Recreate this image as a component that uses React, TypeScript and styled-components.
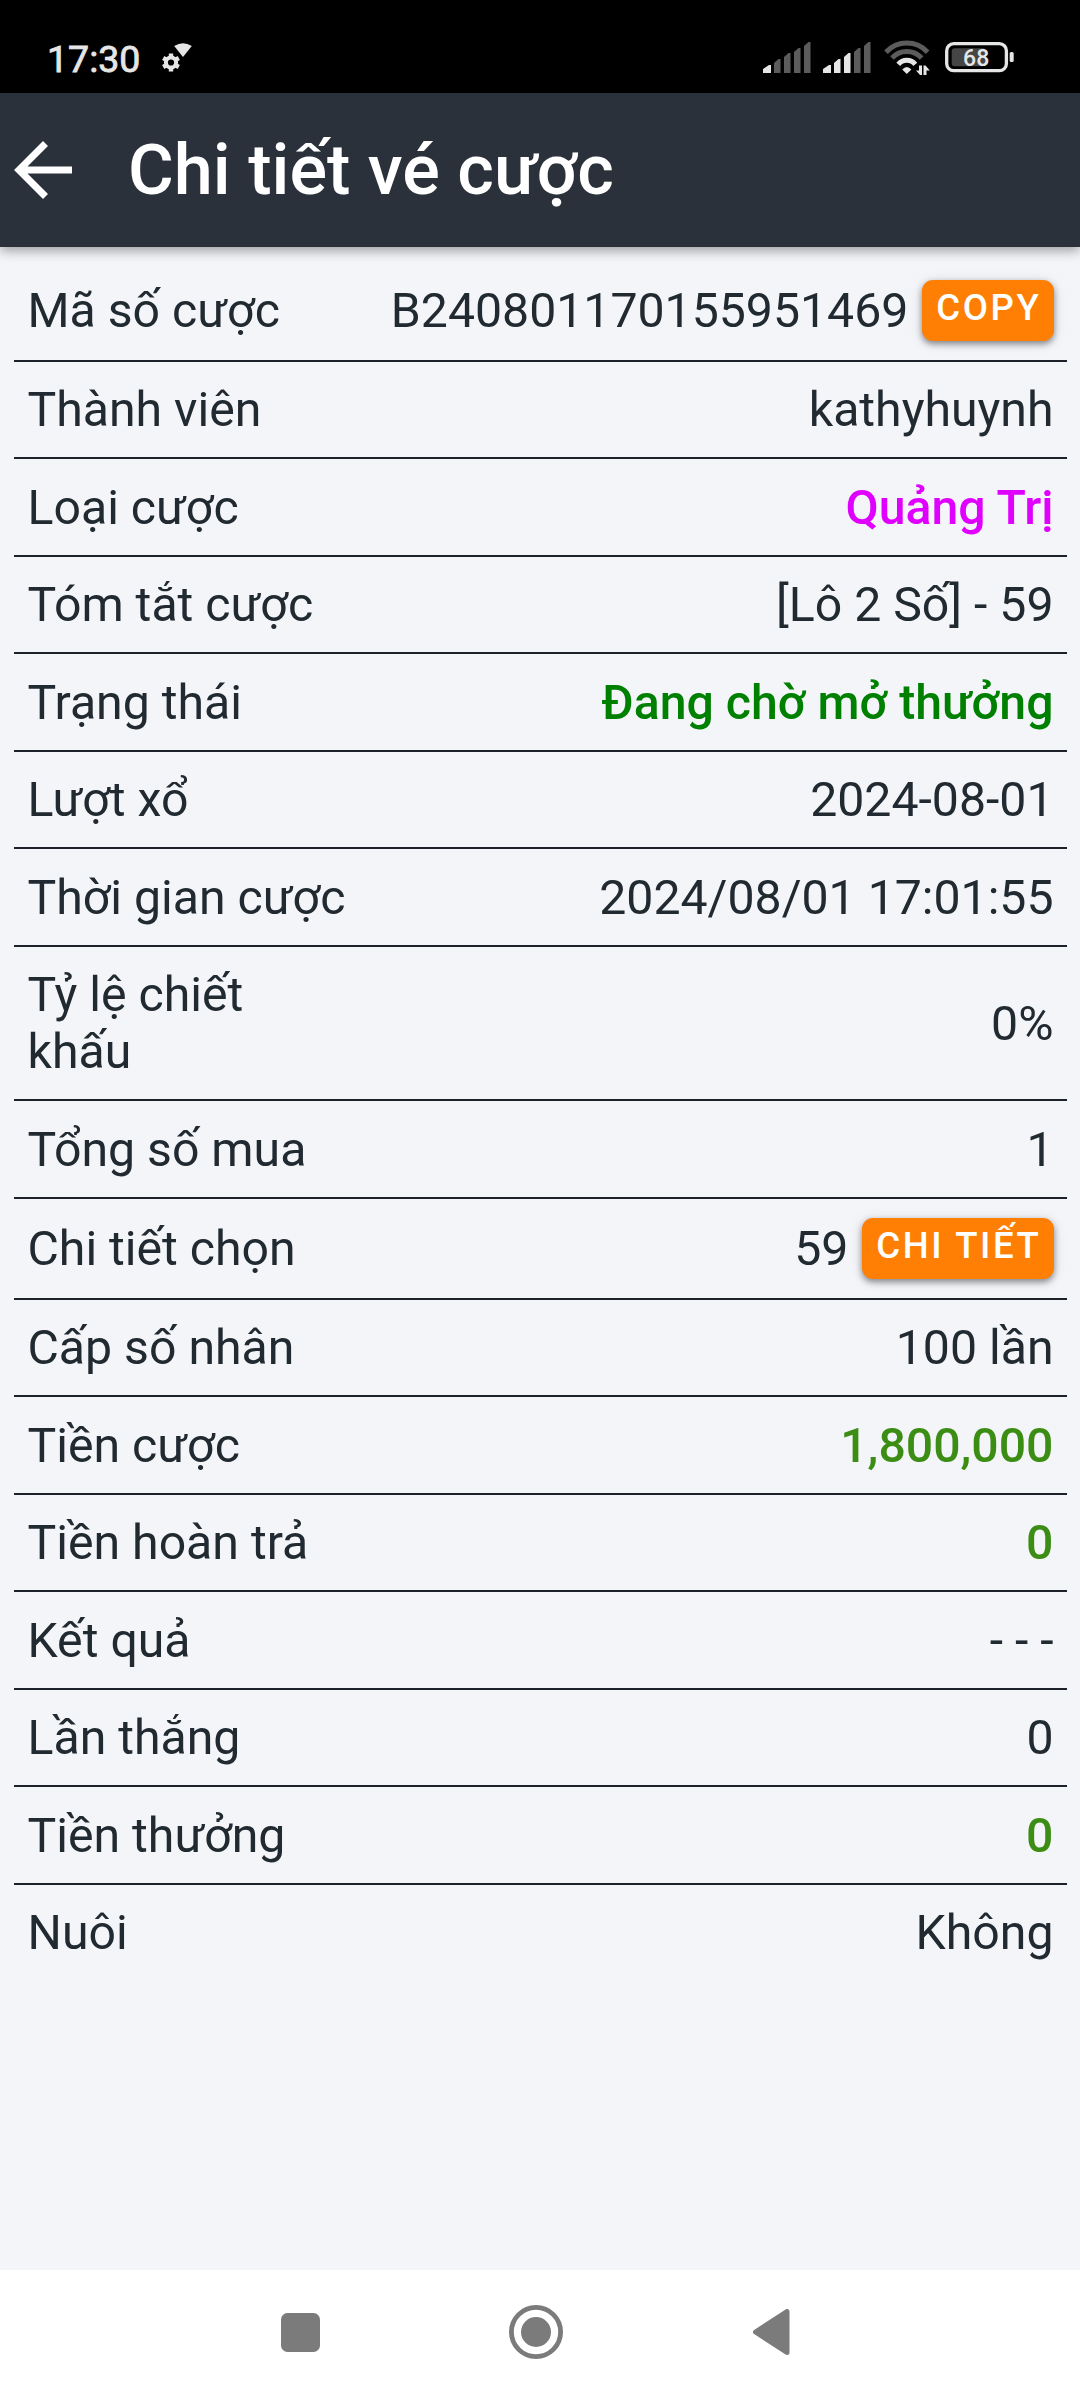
import React from "react";
import styled, { createGlobalStyle } from "styled-components";

const GlobalStyle = createGlobalStyle`
  * { box-sizing: border-box; }
  body { margin: 0; background: #f3f5f9; }
`;

const Screen = styled.div`
  display: flex;
  flex-direction: column;
  width: 1080px;
  height: 2400px;
  background: #f3f5f9;
  color: #212931;
  font-family: Roboto, "Noto Sans", sans-serif;
`;

const StatusBar = styled.div`
  display: flex;
  align-items: center;
  justify-content: space-between;
  flex: none;
  height: 93px;
  padding: 22px 64px 0 47px;
  background: #000;
  color: #e6e6e6;
`;

const StatusGroup = styled.div`
  display: flex;
  align-items: center;
`;

const Clock = styled.span`
  flex: none;
  width: 115px;
  padding-top: 2px;
  font-size: 37.5px;
  font-weight: 400;
  line-height: 44px;
  -webkit-text-stroke: 0.8px #e6e6e6;
`;

const Header = styled.header`
  display: flex;
  align-items: center;
  flex: none;
  height: 154px;
  padding-left: 14px;
  background: #2b313b;
  box-shadow: 0 4px 11px rgba(0, 0, 0, 0.35);
  z-index: 1;
`;

const BackButton = styled.button`
  display: flex;
  flex: none;
  width: 114px;
  padding: 0;
  border: 0;
  background: none;
`;

const Title = styled.h1`
  margin: 0;
  color: #fff;
  font-size: 70.2px;
  font-weight: 500;
  line-height: 82px;
`;

const Details = styled.main`
  flex: 1;
  padding: 14px 13px 0 14px;
`;

const Row = styled.div<{ $height?: number }>`
  display: flex;
  align-items: center;
  justify-content: space-between;
  height: ${(p) => p.$height ?? 97.5}px;
  padding: 0 13.5px;
  border-bottom: 2px solid #1d2129;
  font-size: 48.2px;
  line-height: 57px;
  &:last-child {
    border-bottom-color: transparent;
  }
`;

const Label = styled.span`
  width: 323px;
`;

const Value = styled.span<{ $color?: string }>`
  display: flex;
  align-items: center;
  gap: 14px;
  white-space: nowrap;
  color: ${(p) => p.$color ?? "inherit"};
  font-weight: ${(p) => (p.$color ? 500 : 400)};
`;

const Action = styled.button`
  height: 61px;
  padding: 0 12px 5px 14px;
  border: 0;
  border-radius: 11px;
  background: #ff7f04;
  box-shadow: 0 3px 6px rgba(0, 0, 0, 0.4), 0 2px 14px rgba(0, 0, 0, 0.12);
  color: #fff;
  font: 500 36.6px/56px Roboto, sans-serif;
  letter-spacing: 2.6px;
`;

const NavBar = styled.nav`
  display: flex;
  align-items: center;
  flex: none;
  height: 130px;
  padding: 0 0 6px 281px;
  gap: 189px;
  background: #fff;
`;

const BAR_TOPS = [23, 17, 11, 6, 0];

function Signal({ active }: { active: number }) {
  return (
    <svg width="48" height="31" viewBox="0 0 48 31">
      {BAR_TOPS.map((top, i) => {
        const left = i === 0 ? 0 : 1 + i * 10;
        const right = i === 0 ? 8 : left + 6.5;
        return (
          <path
            key={top}
            d={`M${left} ${top + 4}L${right - 2} ${top}H${right}V31H${left}Z`}
            fill={i < active ? "#e6e6e6" : "#5c5c5c"}
          />
        );
      })}
    </svg>
  );
}

const SignalIcons = styled.div`
  display: flex;
  gap: 12px;
  margin-right: 13px;
`;

const WifiSvg = styled.svg`
  margin-right: 14px;
`;

function Wifi() {
  return (
    <WifiSvg width="47" height="35" viewBox="0 0 47 35" fill="none" strokeWidth="5">
      <path d="M2 12.200A28.300 28.300 0 0 1 43.600 12.200" stroke="#5c5c5c" />
      <path d="M8 18A20 20 0 0 1 37.600 18" stroke="#5c5c5c" />
      <path d="M14.300 24.300A11 11 0 0 1 31.300 24.300" stroke="#e6e6e6" />
      <path d="M22.800 34L18.200 29.500Q22.800 24.500 27.400 29.500Z" fill="#e6e6e6" />
      <path d="M38 25.500V35L36 35L32 30.500H35V25.500Z" fill="#e6e6e6" />
      <path d="M39.500 35V25.500H41.500L45.800 30.500H42.500V35Z" fill="#e6e6e6" />
    </WifiSvg>
  );
}

function Battery() {
  return (
    <svg width="71" height="31" viewBox="0 0 71 31">
      <rect x="1.700" y="1.700" width="59.700" height="27" rx="7" fill="none" stroke="#e6e6e6" strokeWidth="3.300" />
      <rect x="6.700" y="6.200" width="34" height="18" rx="3" fill="#454545" />
      <rect x="64.700" y="10" width="4" height="10" rx="1.500" fill="#e6e6e6" />
      <text x="31.200" y="23.900" textAnchor="middle" fontFamily="Roboto, sans-serif" fontSize="23" fontWeight="500" fill="#e6e6e6">
        68
      </text>
    </svg>
  );
}

function GearWifi() {
  return (
    <svg width="32" height="30" viewBox="0 0 32 30">
      <path d="M12.200 3Q21 -2.500 29.800 3L21 14Z" fill="#e6e6e6" />
      <circle cx="9" cy="19.500" r="5.100" fill="none" stroke="#e6e6e6" strokeWidth="4" />
      {[0, 60, 120, 180, 240, 300].map((a) => (
        <rect key={a} x="6.800" y="10.500" width="4.400" height="4" fill="#e6e6e6" transform={`rotate(${a} 9 19.500)`} />
      ))}
    </svg>
  );
}

type Entry = { label: string; value: string; color?: string; action?: string; height?: number };

const ENTRIES: Entry[] = [
  { label: "Mã số cược", value: "B240801170155951469", action: "COPY", height: 100.9 },
  { label: "Thành viên", value: "kathyhuynh" },
  { label: "Loại cược", value: "Quảng Trị", color: "#e000ff" },
  { label: "Tóm tắt cược", value: "[Lô 2 Số] - 59" },
  { label: "Trạng thái", value: "Đang chờ mở thưởng", color: "#008000" },
  { label: "Lượt xổ", value: "2024-08-01" },
  { label: "Thời gian cược", value: "2024/08/01 17:01:55" },
  { label: "Tỷ lệ chiết khấu", value: "0%", height: 154.5 },
  { label: "Tổng số mua", value: "1" },
  { label: "Chi tiết chọn", value: "59", action: "CHI TIẾT", height: 101.1 },
  { label: "Cấp số nhân", value: "100 lần" },
  { label: "Tiền cược", value: "1,800,000", color: "#3c8d14" },
  { label: "Tiền hoàn trả", value: "0", color: "#3c8d14" },
  { label: "Kết quả", value: "- - -" },
  { label: "Lần thắng", value: "0" },
  { label: "Tiền thưởng", value: "0", color: "#3c8d14" },
  { label: "Nuôi", value: "Không" },
];

export default function App() {
  return (
    <Screen>
      <GlobalStyle />
      <StatusBar>
        <StatusGroup>
          <Clock>17:30</Clock>
          <GearWifi />
        </StatusGroup>
        <StatusGroup>
          <SignalIcons>
            <Signal active={1} />
            <Signal active={3} />
          </SignalIcons>
          <Wifi />
          <Battery />
        </StatusGroup>
      </StatusBar>
      <Header>
        <BackButton aria-label="Quay lại">
          <svg width="59" height="60" viewBox="0 0 59 60" fill="none" stroke="#fff" strokeWidth="7">
            <path d="M58 30H6M31.500 3.500L5 30L31.500 56.500" />
          </svg>
        </BackButton>
        <Title>Chi tiết vé cược</Title>
      </Header>
      <Details>
        {ENTRIES.map((e) => (
          <Row key={e.label} $height={e.height}>
            <Label>{e.label}</Label>
            <Value $color={e.color}>
              {e.value}
              {e.action && <Action>{e.action}</Action>}
            </Value>
          </Row>
        ))}
      </Details>
      <NavBar>
        <svg width="39" height="39" viewBox="0 0 39 39">
          <rect width="39" height="39" rx="6.500" fill="#7b7b7b" />
        </svg>
        <svg width="54" height="54" viewBox="0 0 54 54" fill="#7b7b7b">
          <circle cx="27" cy="27" r="24.600" fill="none" stroke="#7b7b7b" strokeWidth="4.800" />
          <circle cx="27" cy="27" r="15" />
        </svg>
        <svg width="38" height="46" viewBox="0 0 38 46">
          <path d="M3.500 23L35 2.500V43.500Z" fill="#7b7b7b" stroke="#7b7b7b" strokeWidth="5" strokeLinejoin="round" />
        </svg>
      </NavBar>
    </Screen>
  );
}
